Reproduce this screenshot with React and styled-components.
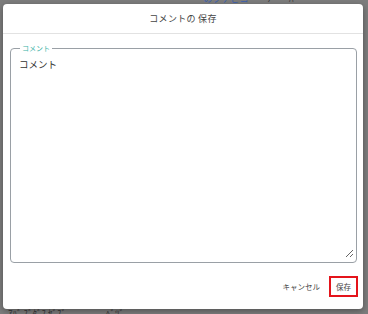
import React from "react";
import styled, { createGlobalStyle } from "styled-components";

const Global = createGlobalStyle`
  html, body { margin: 0; padding: 0; }
  body {
    background: #7d7d7d;
    font-family: "Noto Sans CJK JP", "Noto Sans", sans-serif;
    width: 368px;
    height: 314px;
    overflow: hidden;
  }
`;

const Page = styled.div`
  width: 368px;
  height: 314px;
  padding: 4px 5px 5px 3px;
  box-sizing: border-box;
  position: relative;
`;

const Backdrop = styled.div`
  position: absolute;
  inset: 0;
  overflow: hidden;
  display: flex;
  flex-direction: column;
  justify-content: space-between;
  color: #333;
  font-size: 9px;
  line-height: 10px;
`;

const BgRow = styled.div`
  display: flex;
  gap: ${(p) => p.$gap || 14}px;
  padding-left: ${(p) => p.$left || 0}px;
  margin-top: ${(p) => p.$top || 0}px;
  margin-bottom: ${(p) => p.$bottom || 0}px;
  white-space: nowrap;
`;

const BgText = styled.span`
  color: ${(p) => p.$color || "#333"};
`;

const Dialog = styled.div`
  position: relative;
  height: 100%;
  background: #fff;
  border-radius: 4px;
  box-shadow: 0 2px 6px rgba(0, 0, 0, 0.35);
  display: flex;
  flex-direction: column;
`;

const Header = styled.div`
  height: 29px;
  border-bottom: 1px solid #e2e2e2;
  display: flex;
  align-items: center;
  justify-content: center;
  font-size: 9px;
  color: #444;
  letter-spacing: 0.3px;
`;

const Body = styled.div`
  flex: 1;
  padding: 10px 6px 0 7px;
  display: flex;
  flex-direction: column;
`;

const Field = styled.fieldset`
  margin: 0;
  padding: 0 2px 2px 8px;
  border: 1px solid #9aa0a6;
  border-radius: 4px;
  height: 219px;
  box-sizing: border-box;
  min-width: 0;
`;

const Legend = styled.legend`
  font-size: 7px;
  color: #3bb3a6;
  padding: 0 2px;
  margin-left: 1px;
  line-height: 9px;
`;

const Area = styled.textarea`
  display: block;
  width: 100%;
  height: 205px;
  box-sizing: border-box;
  border: none;
  outline: none;
  resize: vertical;
  font-family: "Noto Sans CJK JP", "Noto Sans", sans-serif;
  font-size: 9.5px;
  color: #333;
  padding: 4px 0 0 0;
  margin: 0;
  background: transparent;
  line-height: 14px;
`;

const Footer = styled.div`
  height: 42px;
  display: flex;
  align-items: center;
  justify-content: flex-end;
  gap: 2px;
  padding: 0 5px 4px 0;
  box-sizing: border-box;
`;

const Button = styled.button`
  font-family: "Noto Sans CJK JP", "Noto Sans", sans-serif;
  font-size: 7.5px;
  color: #444;
  background: transparent;
  border: 2px solid ${(p) => (p.$focused ? "#e4141b" : "transparent")};
  height: 21px;
  padding: 0 5px;
  cursor: pointer;
`;

export default function App() {
  return (
    <>
      <Global />
      <Page>
        <Backdrop>
          <BgRow $left={118} $top={-6} $gap={18}>
            <BgText>ーー</BgText>
            <BgText>ー</BgText>
            <BgText>ｰ</BgText>
            <BgText $color="#3a5fb0">のプテビコ</BgText>
            <BgText>ﾘ</BgText>
            <BgText>ﾊﾞ</BgText>
          </BgRow>
          <BgRow $left={8} $bottom={-5} $gap={40}>
            <BgText>ｱﾊﾞ ｽﾞﾀﾞｽ ｾﾞｽﾞ</BgText>
            <BgText>ﾍﾞﾂﾞ</BgText>
          </BgRow>
        </Backdrop>
        <Dialog>
          <Header>コメントの 保存</Header>
          <Body>
            <Field>
              <Legend>コメント</Legend>
              <Area defaultValue="コメント" />
            </Field>
          </Body>
          <Footer>
            <Button>キャンセル</Button>
            <Button $focused>保存</Button>
          </Footer>
        </Dialog>
      </Page>
    </>
  );
}
